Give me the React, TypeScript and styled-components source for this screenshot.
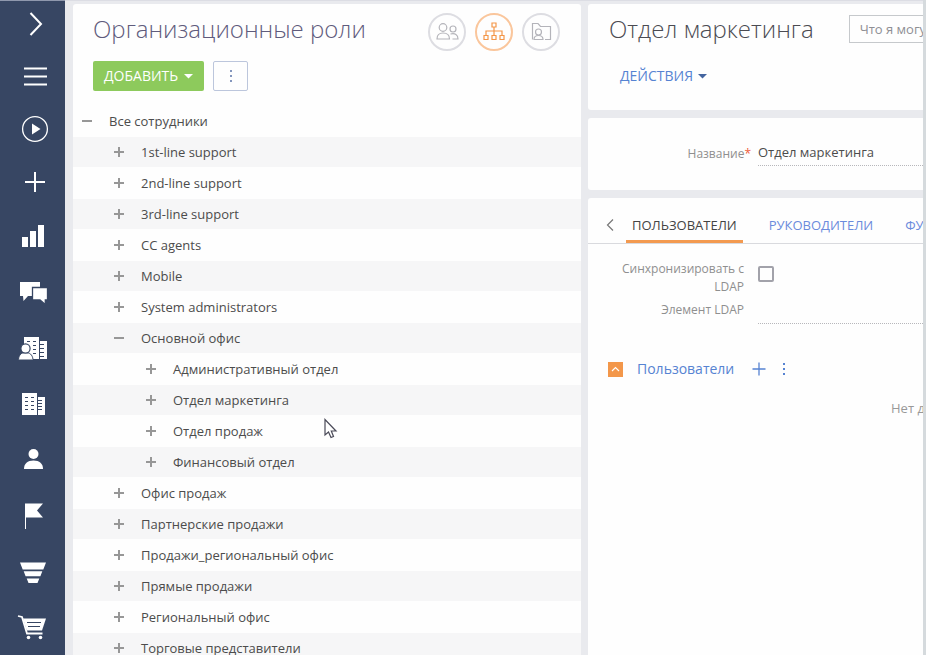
import React from "react";
import styled, { createGlobalStyle } from "styled-components";

const GlobalStyle = createGlobalStyle`
  *, *::before, *::after { box-sizing: border-box; }
  body {
    margin: 0;
    background: #e9eaee;
    color: #4c4c4c;
    font-family: "Open Sans", "Noto Sans", sans-serif;
    font-size: 13px;
    line-height: 18px;
  }
  button, input { font: inherit; color: inherit; }
  button { background: none; border: 0; padding: 0; cursor: pointer; }
`;

const Page = styled.div`
  display: flex;
  height: 100vh;
  overflow: hidden;
  border-right: 3px solid #d5dadd;
`;

const Sidebar = styled.nav`
  flex: 0 0 65px;
  display: flex;
  flex-direction: column;
  gap: 18px;
  padding: 5px 0 0 16px;
  border-top: 1px solid #8f98ad;
  background: #374663;
  overflow: hidden;
`;

const NavGroup = styled.div<{ $gap: number }>`
  display: flex;
  flex-direction: column;
  gap: ${(p) => p.$gap}px;
`;

const NavButton = styled.button`
  width: 36px;
  height: 36px;
  color: #fff;
  svg { display: block; }
`;

const Content = styled.main`
  flex: 1;
  min-width: 0;
  display: grid;
  grid-template-columns: minmax(0, 508fr) minmax(0, 335fr);
  column-gap: 7px;
  padding: 3px 0 0 8px;
  border-top: 1px solid #dcdde4;
  overflow: hidden;
`;

const Panel = styled.section`
  background: #fefefe;
  border-radius: 3px 3px 0 0;
  overflow: hidden;
`;

const PanelHeader = styled.header`
  display: flex;
  align-items: flex-start;
  justify-content: space-between;
  padding: 9px 21px 0 20px;
`;

const Title = styled.h1<{ $dark?: boolean }>`
  margin: 0;
  font-size: 24px;
  line-height: 32px;
  font-weight: 300;
  white-space: nowrap;
  color: ${(p) => (p.$dark ? "#4b4b52" : "#5f5b7c")};
`;

const ModeSwitch = styled.div`
  display: flex;
  gap: 9px;
`;

const ModeButton = styled.button<{ $active?: boolean }>`
  width: 38px;
  height: 38px;
  border: 2px solid ${(p) => (p.$active ? "#fac69c" : "#dddde2")};
  border-radius: 50%;
  color: ${(p) => (p.$active ? "#f39648" : "#b4b4ba")};
  svg { display: block; }
`;

const Toolbar = styled.div`
  display: flex;
  gap: 9px;
  padding: 10px 20px 15px;
`;

const AddButton = styled.button`
  display: flex;
  align-items: center;
  gap: 6px;
  height: 30px;
  padding: 0 11px;
  border-radius: 2px;
  background: #8dca5c;
  color: #fff;
  font-size: 14px;
`;

const MoreButton = styled.button`
  width: 35px;
  height: 30px;
  display: grid;
  place-items: center;
  border: 1px solid #bcc6dc;
  border-radius: 2px;
  color: #8496bd;
`;

const Tree = styled.ul`
  list-style: none;
  margin: 0;
  padding: 0;
`;

const TreeRow = styled.li<{ $level: number }>`
  display: flex;
  align-items: center;
  gap: 16px;
  height: 31px;
  padding-left: ${(p) => 8 + p.$level * 32}px;
  border-bottom: 1px solid #fefefe;
  white-space: nowrap;
  &:nth-child(even) { background: #f6f6f7; }
`;

const Toggle = styled.button`
  width: 12px;
  height: 12px;
  color: #979797;
  svg { display: block; }
`;

const Details = styled.div`
  display: flex;
  flex-direction: column;
  gap: 8px;
  min-width: 0;
  height: 100%;
`;

const Card = styled(Panel)<{ $grow?: boolean }>`
  border-radius: 3px 0 0 ${(p) => (p.$grow ? 0 : 3)}px;
  flex: ${(p) => (p.$grow ? "1" : "none")};
`;

const DetailsHeader = styled.header`
  display: flex;
  align-items: center;
  gap: 35px;
  padding: 9px 0 0 21px;
`;

const SearchBox = styled.input`
  flex: 0 0 240px;
  height: 28px;
  padding: 0 10px;
  border: 1px solid #c6c9cc;
  background: #fefefe;
  outline: 0;
  font-weight: 500;
  color: #9b9ba0;
  &::placeholder { color: #8f8f94; opacity: 1; }
`;

const ActionsBar = styled.div`
  padding: 17px 32px 20px;
`;

const ActionsButton = styled.button`
  display: flex;
  align-items: center;
  gap: 5px;
  height: 28px;
  font-size: 14px;
  color: #5683d2;
  svg { color: #44659f; }
`;

const Label = styled.label`
  padding-left: 20px;
  font-size: 12px;
  color: #8f8f8f;
  text-align: right;
  align-self: center;
`;

const FieldRow = styled.div`
  display: grid;
  grid-template-columns: 156px minmax(0, 1fr);
  column-gap: 14px;
`;

const NameRow = styled(FieldRow)`
  padding: 20px 0 24px;
  ${Label} { padding-top: 4px; }
`;

const Required = styled.span`
  margin-right: -7px;
  color: #ee5b3a;
`;

const TextInput = styled.input`
  width: 100%;
  height: 28px;
  padding: 0;
  border: 0;
  border-bottom: 1px dotted #b7b7bb;
  background: none;
  outline: 0;
`;

const Tabs = styled.div`
  display: flex;
  height: 46px;
  padding-left: 18px;
  border-bottom: 1px solid #d9dade;
`;

const TabArrow = styled.button`
  width: 10px;
  margin-right: 12px;
  color: #777;
  padding-top: 12px;
`;

const Tab = styled.button<{ $active?: boolean }>`
  flex: none;
  padding: 12px 6px 0;
  margin-right: 20px;
  color: ${(p) => (p.$active ? "#444" : "#6b8bdc")};
  border-bottom: 3px solid ${(p) => (p.$active ? "#f39a50" : "transparent")};
`;

const Form = styled.div`
  display: flex;
  flex-direction: column;
  padding-top: 16px;
`;

const CheckBox = styled.input`
  appearance: none;
  width: 16px;
  height: 16px;
  margin: 6px 0 0;
  border: 2px solid #a2a2aa;
  border-radius: 2px;
  background: #fefefe;
`;

const Section = styled.div`
  display: flex;
  align-items: center;
  padding: 35px 0 0 20px;
  color: #5683d2;
`;

const Collapse = styled.button`
  width: 15px;
  height: 15px;
  background: #f3974a;
  color: #fff;
  svg { display: block; }
`;

const SectionTitle = styled.h2`
  margin: 0 17px 0 14px;
  font-size: 14px;
  line-height: 20px;
  font-weight: 400;
`;

const SectionButton = styled.button`
  width: 16px;
  height: 16px;
  margin-right: 9px;
  svg { display: block; }
`;

const Empty = styled.p`
  margin: 0;
  padding: 20px 0 0 303px;
  color: #999;
  white-space: nowrap;
`;

const Pointer = styled.svg`
  position: fixed;
  left: 323px;
  top: 418px;
  pointer-events: none;
`;

const navTop = [
  { name: "Развернуть", art: <path d="M14.5 7L25 18 14.5 29" fill="none" stroke="currentColor" strokeWidth="2" /> },
  { name: "Меню", art: <path d="M8 9.5H31M8 17.5H31M8 25.5H31" stroke="currentColor" strokeWidth="2" /> },
  {
    name: "Запустить процесс",
    art: (
      <>
        <circle cx="19" cy="17" r="12.4" fill="none" stroke="currentColor" strokeWidth="1.3" />
        <path d="M16 11.5L24.5 17 16 22.5z" fill="currentColor" />
      </>
    ),
  },
  { name: "Создать", art: <path d="M19 7V27M9 17H29" stroke="currentColor" strokeWidth="2" /> },
];

const navMain = [
  { name: "Итоги", art: <path d="M6 18h6v10H6zM14 12h6v16h-6zM22 6h6v22h-6z" fill="currentColor" /> },
  {
    name: "Лента",
    art: (
      <>
        <path d="M4 7H24V21H12L7.5 26 7 21H4z" fill="currentColor" />
        <path d="M16.5 12.5H31.5V25H29.3V29.5L24 25H16.5z" fill="currentColor" stroke="#374663" strokeWidth="1.3" />
      </>
    ),
  },
  {
    name: "Контакты",
    art: (
      <>
        <path d="M8 6H23V28H8zM24 10H31V28H24z" fill="currentColor" />
        <path d="M11 10.5h3M17 10.5h3M17 14.5h3M17 18.5h3M17 22.5h3M24 13.5h4M24 17.5h4M24 21.5h4M24 25.5h4" stroke="#374663" />
        <path d="M2.5 28.5C3 23.5 5.5 21.5 9.5 21.5S16.5 23.5 17 28.5" fill="currentColor" stroke="#374663" />
        <circle cx="9.5" cy="17.5" r="4.6" fill="currentColor" stroke="#374663" strokeWidth="1.2" />
      </>
    ),
  },
  {
    name: "Контрагенты",
    art: (
      <>
        <path d="M6 6H21V28H6zM22 10H29V28H22z" fill="currentColor" />
        <path d="M9 10.5h3M15 10.5h3M9 14.5h3M15 14.5h3M9 18.5h3M15 18.5h3M9 22.5h3M15 22.5h3M22 13.5h4M22 16.5h4M22 19.5h4M22 22.5h4" stroke="#374663" />
      </>
    ),
  },
  {
    name: "Сотрудники",
    art: (
      <>
        <circle cx="17.5" cy="11" r="5" fill="currentColor" />
        <path d="M8 26C8 20.5 11.5 17.5 17.5 17.5S27 20.5 27 26z" fill="currentColor" />
      </>
    ),
  },
  { name: "Лиды", art: <path d="M9 4.5H27L21 11.5 27 18.5H10V30H9z" fill="currentColor" /> },
  { name: "Продажи", art: <path d="M4 7.5H30L27.3 14.5H6.7zM7.7 16.3H26.3L24.4 21.3H9.6zM10.7 23.5H23.3L21.5 28H12.5z" fill="currentColor" /> },
  {
    name: "Заказы",
    art: (
      <>
        <path d="M2 5L6 6L11 22.5H26.5" fill="none" stroke="currentColor" strokeWidth="1.8" />
        <path d="M7 7.5H30L26 19.5H10.7z" fill="currentColor" />
        <path d="M11 11.5H25M12 15.5H24" stroke="#374663" />
        <circle cx="12.5" cy="26.5" r="1.8" fill="currentColor" />
        <circle cx="24.5" cy="26.5" r="1.8" fill="currentColor" />
      </>
    ),
  },
];

const rows: { label: string; level: number; open?: boolean }[] = [
  { label: "Все сотрудники", level: 0, open: true },
  { label: "1st-line support", level: 1 },
  { label: "2nd-line support", level: 1 },
  { label: "3rd-line support", level: 1 },
  { label: "CC agents", level: 1 },
  { label: "Mobile", level: 1 },
  { label: "System administrators", level: 1 },
  { label: "Основной офис", level: 1, open: true },
  { label: "Административный отдел", level: 2 },
  { label: "Отдел маркетинга", level: 2 },
  { label: "Отдел продаж", level: 2 },
  { label: "Финансовый отдел", level: 2 },
  { label: "Офис продаж", level: 1 },
  { label: "Партнерские продажи", level: 1 },
  { label: "Продажи_региональный офис", level: 1 },
  { label: "Прямые продажи", level: 1 },
  { label: "Региональный офис", level: 1 },
  { label: "Торговые представители", level: 1 },
];

const Caret = () => (
  <svg width="9" height="5" viewBox="0 0 9 5" aria-hidden="true">
    <path d="M0 0H9L4.5 4.5z" fill="currentColor" />
  </svg>
);

const Dots = () => (
  <svg width="16" height="16" viewBox="0 0 16 16" aria-hidden="true">
    <path d="M7 2h2v2H7zM7 7h2v2H7zM7 12h2v2H7z" fill="currentColor" />
  </svg>
);

function NavItems({ items }: { items: typeof navTop }) {
  return (
    <>
      {items.map((item) => (
        <NavButton key={item.name} aria-label={item.name}>
          <svg width="36" height="36" viewBox="0 0 36 36">{item.art}</svg>
        </NavButton>
      ))}
    </>
  );
}

export default function App() {
  return (
    <>
      <GlobalStyle />
      <Page>
        <Sidebar>
          <NavGroup $gap={17}><NavItems items={navTop} /></NavGroup>
          <NavGroup $gap={20}><NavItems items={navMain} /></NavGroup>
        </Sidebar>
        <Content>
          <Panel>
            <PanelHeader>
              <Title>Организационные роли</Title>
              <ModeSwitch>
                <ModeButton aria-label="Пользователи">
                  <svg width="34" height="34" viewBox="0 0 34 34" fill="none" stroke="currentColor" strokeWidth="1.2">
                    <circle cx="13" cy="12.5" r="3.8" />
                    <path d="M7 24C7 19.5 9 18 13 18S19.5 19.5 19.5 24z" />
                    <circle cx="23" cy="14" r="3" />
                    <path d="M20.5 19C25 18 28 19.5 28 24H22.5" />
                  </svg>
                </ModeButton>
                <ModeButton $active aria-label="Организационные роли">
                  <svg width="34" height="34" viewBox="0 0 34 34" fill="none" stroke="currentColor" strokeWidth="1.2">
                    <path d="M15 8h4v4h-4zM7 20.5h4v4H7zM15 20.5h4v4h-4zM23 20.5h4v4h-4zM17 12v8.5M9 20.5V16h16v4.5" />
                  </svg>
                </ModeButton>
                <ModeButton aria-label="Функциональные роли">
                  <svg width="34" height="34" viewBox="0 0 34 34" fill="none" stroke="currentColor" strokeWidth="1.2">
                    <path d="M8.5 24.5V8.5H14L16.5 11.5H26.5V24.5H21" />
                    <circle cx="14.5" cy="17" r="3" />
                    <path d="M10 24.5C10 21.5 11.5 20.5 14.5 20.5S19 21.5 19 24.5z" />
                  </svg>
                </ModeButton>
              </ModeSwitch>
            </PanelHeader>
            <Toolbar>
              <AddButton>ДОБАВИТЬ<Caret /></AddButton>
              <MoreButton aria-label="Ещё"><Dots /></MoreButton>
            </Toolbar>
            <Tree>
              {rows.map((row) => (
                <TreeRow key={row.label} $level={row.level}>
                  <Toggle aria-label={row.label} aria-expanded={!!row.open}>
                    <svg width="12" height="12" viewBox="0 0 12 12" stroke="currentColor" strokeWidth="2">
                      <path d={row.open ? "M1 6H11" : "M1 6H11M6 1V11"} />
                    </svg>
                  </Toggle>
                  <span>{row.label}</span>
                </TreeRow>
              ))}
            </Tree>
          </Panel>
          <Details>
            <Card>
              <DetailsHeader>
                <Title $dark>Отдел маркетинга</Title>
                <SearchBox aria-label="Командная строка" placeholder="Что я могу" />
              </DetailsHeader>
              <ActionsBar>
                <ActionsButton>ДЕЙСТВИЯ<Caret /></ActionsButton>
              </ActionsBar>
            </Card>
            <Card>
              <NameRow>
                <Label htmlFor="name">Название<Required>*</Required></Label>
                <TextInput id="name" defaultValue="Отдел маркетинга" />
              </NameRow>
            </Card>
            <Card $grow>
              <Tabs role="tablist">
                <TabArrow aria-label="Предыдущие вкладки">
                  <svg width="8" height="14" viewBox="0 0 8 14" fill="none" stroke="currentColor" strokeWidth="1.2">
                    <path d="M7 1.5L1.5 7 7 12.5" />
                  </svg>
                </TabArrow>
                <Tab role="tab" aria-selected $active>ПОЛЬЗОВАТЕЛИ</Tab>
                <Tab role="tab">РУКОВОДИТЕЛИ</Tab>
                <Tab role="tab">ФУ</Tab>
              </Tabs>
              <Form>
                <FieldRow>
                  <Label htmlFor="sync">Синхронизировать с LDAP</Label>
                  <CheckBox id="sync" type="checkbox" />
                </FieldRow>
                <FieldRow>
                  <Label htmlFor="element">Элемент LDAP</Label>
                  <TextInput id="element" />
                </FieldRow>
              </Form>
              <Section>
                <Collapse aria-label="Свернуть">
                  <svg width="15" height="15" viewBox="0 0 15 15" fill="none" stroke="currentColor" strokeWidth="1.2">
                    <path d="M4 9L7.5 5.5 11 9" />
                  </svg>
                </Collapse>
                <SectionTitle>Пользователи</SectionTitle>
                <SectionButton aria-label="Добавить пользователя">
                  <svg width="16" height="16" viewBox="0 0 16 16" stroke="currentColor" strokeWidth="1.3">
                    <path d="M8 1.5V14.5M1.5 8H14.5" />
                  </svg>
                </SectionButton>
                <SectionButton aria-label="Действия"><Dots /></SectionButton>
              </Section>
              <Empty>Нет д</Empty>
            </Card>
          </Details>
        </Content>
      </Page>
      <Pointer width="15" height="22" viewBox="0 0 15 22" aria-hidden="true">
        <path d="M2 1.5V17L5.5 14 8 19.5 10.5 18.5 8.3 13H13z" fill="#fff" stroke="#4a4a58" strokeWidth="1.2" />
      </Pointer>
    </>
  );
}
